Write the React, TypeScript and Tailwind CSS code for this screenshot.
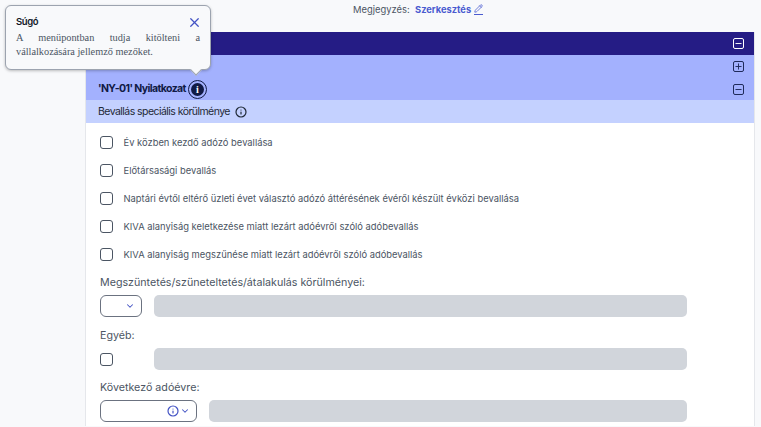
import { ChevronDown, Info, Minus, Pencil, Plus, X } from 'lucide-react'

const sans = 'font-["Inter",sans-serif]'

function ToggleBox({ open, className }: { open: boolean; className: string }) {
  const Icon = open ? Minus : Plus
  return (
    <span className={`flex h-[11px] w-[11px] items-center justify-center rounded-[2px] border-[1.5px] ${className}`}>
      <Icon size={9} strokeWidth={2.5} />
    </span>
  )
}

function Header({ bg, open, text, height = 'h-[23px]', children }: { bg: string; open: boolean; text: string; height?: string; children?: React.ReactNode }) {
  return (
    <div className={`flex items-center justify-between pl-[12px] pr-[10px] ${height} ${bg}`}>
      <div className="flex items-center">{children}</div>
      <ToggleBox open={open} className={text} />
    </div>
  )
}

function CheckBox() {
  return <span className="h-[13px] w-[13px] shrink-0 rounded-[3px] border-[1.5px] border-[#4b5563] bg-white" />
}

function CheckRow({ label }: { label: string }) {
  return (
    <div className="flex h-[28px] items-center gap-[10.5px]">
      <CheckBox />
      <span className="mt-[2px] text-[9.4px] text-[#4b5563]">{label}</span>
    </div>
  )
}

function DisabledInput() {
  return <div className="h-[22px] flex-1 rounded-[5px] bg-[#d1d5db]" />
}

function Label({ children }: { children: React.ReactNode }) {
  return <div className="text-[10.7px] leading-[14px] text-[#4b5563]">{children}</div>
}

const checks = [
  'Év közben kezdő adózó bevallása',
  'Előtársasági bevallás',
  'Naptári évtől eltérő üzleti évet választó adózó áttérésének évéről készült évközi bevallása',
  'KIVA alanyiság keletkezése miatt lezárt adóévről szóló adóbevallás',
  'KIVA alanyiság megszűnése miatt lezárt adóévről szóló adóbevallás',
]

export default function App() {
  return (
    <div className={`relative h-[427px] w-[761px] overflow-hidden bg-[#f8f9fb] ${sans}`}>
      <div className="flex h-[32px] items-start pl-[353px] pt-[3px] text-[9.4px] leading-[13px]">
        <span className="text-[#4b5563]">Megjegyzés:</span>
        <span className="ml-[5.5px] text-[9.3px] font-bold text-[#4a5bd0]">Szerkesztés</span>
        <span className="ml-[3px] mt-[1px] flex h-[11px] w-[9px] items-start border-b border-[#4a5bd0]">
          <Pencil size={9} className="text-[#4a5bd0]" />
        </span>
      </div>

      <div className="ml-[85px] w-[670px] border-x border-[#e5e7eb] bg-white">
        <Header bg="bg-[#251c85]" open text="border-white text-white" />
        <Header bg="bg-[#a3b1fe]" open={false} text="border-[#1f2a5a] text-[#1f2a5a]" />
        <Header bg="bg-[#a3b1fe]" open text="border-[#1f2a5a] text-[#1f2a5a]" height="h-[22px]">
          <span className="text-[10.5px] font-bold tracking-[-0.6px] text-[#111a45]">'NY-01' Nyilatkozat</span>
          <span className="ml-[2px] flex h-[19px] w-[19px] items-center justify-center rounded-full border-[1.5px] border-[#111a45]">
            <span className="flex h-[13px] w-[13px] items-center justify-center rounded-full bg-[#111a45] font-['Liberation_Serif',serif] text-[10px] font-bold text-white">i</span>
          </span>
        </Header>
        <div className="flex h-[23px] items-center gap-[5px] bg-[#c4d1ff] pl-[12px]">
          <span className="text-[10.5px] tracking-[-0.55px] text-[#1f2937]">Bevallás speciális körülménye</span>
          <Info size={12} strokeWidth={2.4} className="text-[#1f2937]" />
        </div>

        <div className="px-[14px] pb-[4px] pt-[5px]">
          {checks.map((c) => (
            <CheckRow key={c} label={c} />
          ))}

          <div className="mt-[8px]">
            <Label>Megszüntetés/szüneteltetés/átalakulás körülményei:</Label>
          </div>
          <div className="mt-[5px] flex gap-[12px] pr-[53px]">
            <div className="flex h-[22px] w-[42px] items-center justify-end rounded-[6px] border border-[#6b7280] bg-white pr-[6px]">
              <ChevronDown size={10} strokeWidth={2.5} className="text-[#4353c4]" />
            </div>
            <DisabledInput />
          </div>

          <div className="mt-[12px]">
            <Label>Egyéb:</Label>
          </div>
          <div className="mt-[5px] flex items-center gap-[41px] pr-[53px]">
            <CheckBox />
            <DisabledInput />
          </div>

          <div className="mt-[11px]">
            <Label>Következő adóévre:</Label>
          </div>
          <div className="mt-[5px] flex gap-[12px] pr-[53px]">
            <div className="flex h-[22px] w-[97px] items-center justify-end gap-[1px] rounded-[6px] border border-[#6b7280] bg-white pr-[6px]">
              <Info size={12} strokeWidth={2.4} className="text-[#4353c4]" />
              <ChevronDown size={10} strokeWidth={2.5} className="text-[#4353c4]" />
            </div>
            <DisabledInput />
          </div>
        </div>
      </div>

      {/* súgó popover */}
      <div className="absolute left-[5px] top-[5px] h-[65px] w-[206px] rounded-[6px] border border-[#9ca3af] bg-[#f8f9fb] px-[10px] pt-[9px] shadow-[0_1px_3px_rgba(0,0,0,0.25)]">
        <div className="flex items-center justify-between">
          <span className="text-[9.5px] font-semibold tracking-[-0.4px] text-[#111827]">Súgó</span>
          <X size={15} strokeWidth={2} className="mr-[-2px] text-[#4353c4]" />
        </div>
        <p className="mt-[1px] text-justify font-['Liberation_Serif',serif] text-[10.3px] leading-[14px] text-[#4b5563]">
          A menüpontban tudja kitölteni a vállalkozására jellemző mezőket.
        </p>
        <span className="absolute bottom-[-5px] left-[186px] h-[8px] w-[8px] rotate-45 border-b border-r border-[#9ca3af] bg-[#f8f9fb]" />
      </div>
    </div>
  )
}
